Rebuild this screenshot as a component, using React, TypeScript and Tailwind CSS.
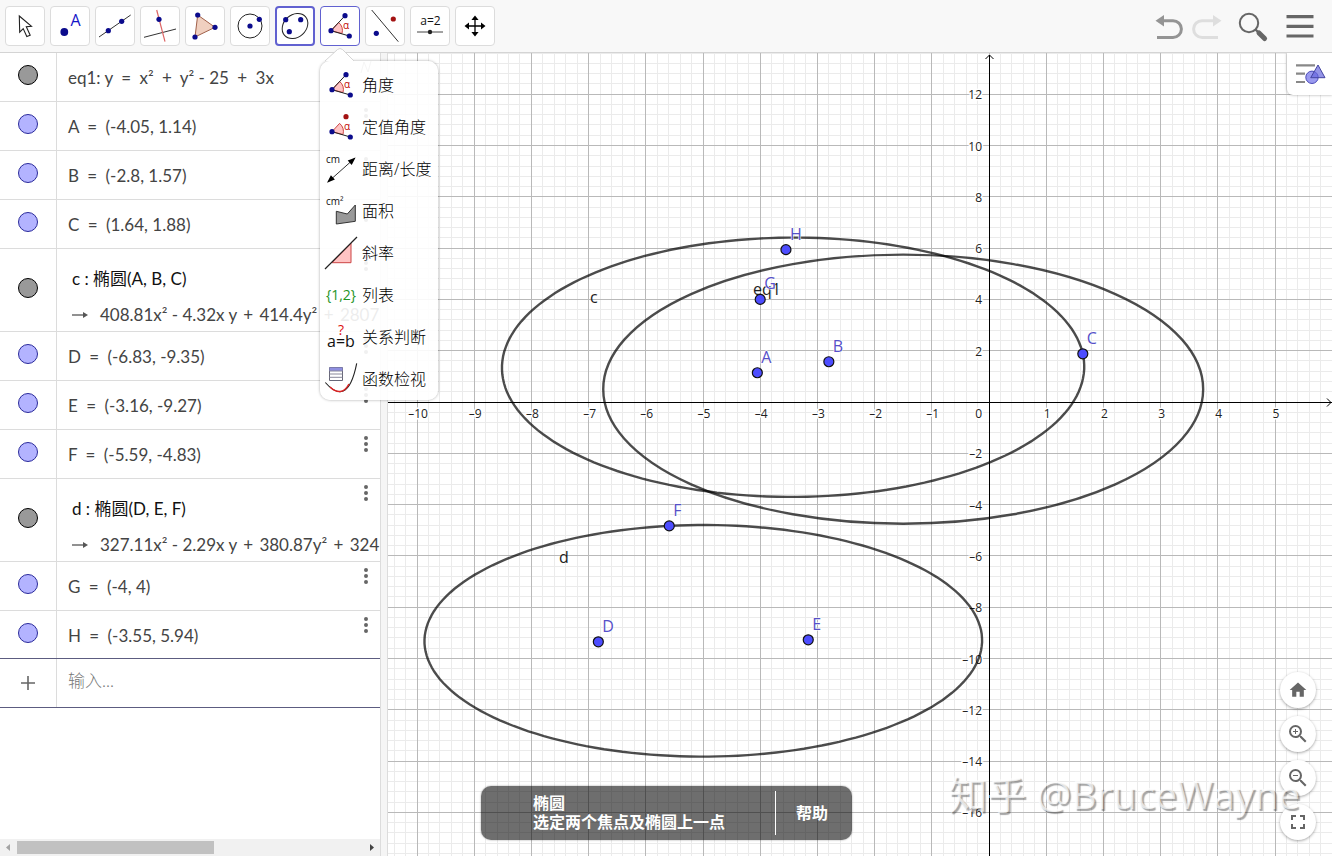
import type { ReactNode } from "react";
import { MdFullscreen, MdHome, MdZoomIn, MdZoomOut } from "react-icons/md";

const BLUE = "#0b0b8c";

type Row = {
  name: string;
  text: string;
  output?: string;
  curve?: boolean;
};

const rows: Row[] = [
  { name: "eq1", text: "eq1: y = x² + y² - 25 + 3x", curve: true },
  { name: "A", text: "A = (-4.05, 1.14)" },
  { name: "B", text: "B = (-2.8, 1.57)" },
  { name: "C", text: "C = (1.64, 1.88)" },
  {
    name: "c",
    text: "c : 椭圆(A, B, C)",
    output: "408.81x² - 4.32x y + 414.4y² + 2807",
    curve: true,
  },
  { name: "D", text: "D = (-6.83, -9.35)" },
  { name: "E", text: "E = (-3.16, -9.27)" },
  { name: "F", text: "F = (-5.59, -4.83)" },
  {
    name: "d",
    text: "d : 椭圆(D, E, F)",
    output: "327.11x² - 2.29x y + 380.87y² + 324",
    curve: true,
  },
  { name: "G", text: "G = (-4, 4)" },
  { name: "H", text: "H = (-3.55, 5.94)" },
];

type Point = { name: string; x: number; y: number };

const points: Point[] = [
  { name: "A", x: -4.05, y: 1.14 },
  { name: "B", x: -2.8, y: 1.57 },
  { name: "C", x: 1.64, y: 1.88 },
  { name: "D", x: -6.83, y: -9.35 },
  { name: "E", x: -3.16, y: -9.27 },
  { name: "F", x: -5.59, y: -4.83 },
  { name: "G", x: -4, y: 4 },
  { name: "H", x: -3.55, y: 5.94 },
];

// origin and scale of the drawing plane
const OX = 601;
const OY = 349;
const SX = 57.2;
const SY = 25.65;

const px = (x: number) => OX + x * SX;
const py = (y: number) => OY - y * SY;
const crisp = (v: number) => Math.floor(v) + 0.5;

const AX = crisp(OX);
const AY = crisp(OY);

const range = (from: number, to: number) =>
  Array.from({ length: to - from + 1 }, (_, i) => from + i);

const label = (n: number) => (n < 0 ? `–${-n}` : `${n}`);

// ellipse with foci p and q that passes through r
function ellipsePath(p: Point, q: Point, r: Point) {
  const a =
    (Math.hypot(r.x - p.x, r.y - p.y) + Math.hypot(r.x - q.x, r.y - q.y)) / 2;
  const c = Math.hypot(q.x - p.x, q.y - p.y) / 2;
  const b = Math.sqrt(a * a - c * c);
  const t = Math.atan2(q.y - p.y, q.x - p.x);
  const cx = (p.x + q.x) / 2;
  const cy = (p.y + q.y) / 2;
  const pts = range(0, 179).map((i) => {
    const s = (i * Math.PI) / 90;
    const u = a * Math.cos(s);
    const v = b * Math.sin(s);
    const x = cx + u * Math.cos(t) - v * Math.sin(t);
    const y = cy + u * Math.sin(t) + v * Math.cos(t);
    return `${px(x).toFixed(1)} ${py(y).toFixed(1)}`;
  });
  return `M${pts.join("L")}Z`;
}

const [A, B, C, D, E, F] = points;

function Svg({ children }: { children: ReactNode }) {
  return (
    <svg
      viewBox="0 0 32 32"
      fill="none"
      className="size-8 shrink-0 overflow-visible font-['Open_Sans',sans-serif] font-normal"
      aria-hidden="true"
    >
      {children}
    </svg>
  );
}

function Dot({ x, y, fill = BLUE }: { x: number; y: number; fill?: string }) {
  return <circle cx={x} cy={y} r="2.6" fill={fill} />;
}

function AngleMark({ fixed }: { fixed?: boolean }) {
  return (
    <Svg>
      <path d="M7 20.7L14.6 12.4A11 11 0 0 1 18 23.5Z" fill="#ffc4c4" stroke="#c44" />
      {!fixed && <path d="M7 20.7L21 5.7" stroke="#222" />}
      <path d="M7 20.7L25.3 26" stroke="#222" />
      <Dot x={7} y={20.7} />
      <Dot x={21} y={5.7} fill={fixed ? "#a31212" : BLUE} />
      <Dot x={25.3} y={26} />
      <text x="19" y="19" fontSize="10" fill="#c00000">
        α
      </text>
    </Svg>
  );
}

const tools: { name: string; icon: ReactNode }[] = [
  {
    name: "移动",
    icon: (
      <Svg>
        <path
          d="M10.3 6L22.5 16.3L17.3 16.8L21.2 25.2L17.8 26.6L14.2 18.6L10.7 22.2Z"
          fill="#fff"
          stroke="#222"
          strokeWidth="1.1"
        />
      </Svg>
    ),
  },
  {
    name: "点",
    icon: (
      <Svg>
        <circle cx="10.3" cy="22" r="3.9" fill={BLUE} />
        <text x="16.5" y="16" fontSize="16" fill="#1414c8">
          A
        </text>
      </Svg>
    ),
  },
  {
    name: "直线",
    icon: (
      <Svg>
        <path d="M0 27L31.7 5" stroke="#333" />
        <Dot x={9.3} y={20.7} />
        <Dot x={22.7} y={11.3} />
      </Svg>
    ),
  },
  {
    name: "垂线",
    icon: (
      <Svg>
        <path d="M0 27.3L32 19" stroke="#333" />
        <path d="M12.7 0L21 31.7" stroke="#d66" strokeWidth="1.2" />
        <Dot x={15} y={9.3} />
      </Svg>
    ),
  },
  {
    name: "多边形",
    icon: (
      <Svg>
        <path d="M8.7 5L26 17.3L6 27Z" fill="#f0d0c0" stroke="#a0604a" />
        <Dot x={8.7} y={5} />
        <Dot x={26} y={17.3} />
        <Dot x={6} y={27} />
      </Svg>
    ),
  },
  {
    name: "圆",
    icon: (
      <Svg>
        <circle cx="16" cy="16" r="12" stroke="#222" />
        <Dot x={16} y={16} />
        <Dot x={25.3} y={9.3} />
      </Svg>
    ),
  },
  {
    name: "椭圆",
    icon: (
      <Svg>
        <ellipse
          cx="16"
          cy="16"
          rx="14"
          ry="11.2"
          stroke="#222"
          transform="rotate(-42 16 16)"
        />
        <Dot x={6.7} y={9.7} />
        <Dot x={21.7} y={9.7} />
        <Dot x={10.3} y={21.7} />
      </Svg>
    ),
  },
  { name: "角度", icon: <AngleMark /> },
  {
    name: "轴对称",
    icon: (
      <Svg>
        <path d="M2.7 0L29.3 31.7" stroke="#333" />
        <Dot x={24.3} y={9} fill="#a31212" />
        <Dot x={7.3} y={23.3} />
      </Svg>
    ),
  },
  {
    name: "滑动条",
    icon: (
      <Svg>
        <text x="16.5" y="15" fontSize="12" textAnchor="middle" fill="#111">
          a=2
        </text>
        <path d="M3 22H29" stroke="#444" />
        <circle cx="16" cy="22" r="2.2" fill="#222" />
      </Svg>
    ),
  },
  {
    name: "移动视图",
    icon: (
      <Svg>
        <path d="M16 8V24M8 16H24" stroke="#000" strokeWidth="1.3" />
        <path
          d="M16 5.5L19.6 10H12.4ZM16 26.5L19.6 22H12.4ZM5.5 16L10 12.4V19.6ZM26.5 16L22 12.4V19.6Z"
          fill="#000"
        />
      </Svg>
    ),
  },
];

const menu: { name: string; icon: ReactNode }[] = [
  { name: "角度", icon: <AngleMark /> },
  { name: "定值角度", icon: <AngleMark fixed /> },
  {
    name: "距离/长度",
    icon: (
      <Svg>
        <text x="1" y="10" fontSize="10" fill="#111">
          cm
        </text>
        <path d="M3 29L29.6 5.3" stroke="#333" />
        <path
          d="M30.6 4.4L26.7 12L22.7 7.6ZM2 29.8L5.9 22.2L9.9 26.6Z"
          fill="#000"
        />
      </Svg>
    ),
  },
  {
    name: "面积",
    icon: (
      <Svg>
        <text x="1" y="10" fontSize="10" fill="#111">
          cm²
        </text>
        <path
          d="M11.3 16.3L22.3 19L30.3 10V26.3L11.3 29Z"
          fill="#999"
          stroke="#333"
        />
      </Svg>
    ),
  },
  {
    name: "斜率",
    icon: (
      <Svg>
        <path d="M7 25.7H26V6.3Z" fill="#ffc4c4" stroke="#c44" />
        <path d="M0 32L32 0" stroke="#222" strokeWidth="1.2" />
      </Svg>
    ),
  },
  {
    name: "列表",
    icon: (
      <Svg>
        <text x="16" y="21" fontSize="14" textAnchor="middle" fill="#1f941f">
          {"{1,2}"}
        </text>
      </Svg>
    ),
  },
  {
    name: "关系判断",
    icon: (
      <Svg>
        <text x="16" y="14" fontSize="14" textAnchor="middle" fill="#d11">
          ?
        </text>
        <text x="16" y="26" fontSize="16" textAnchor="middle" fill="#111">
          a=b
        </text>
      </Svg>
    ),
  },
  {
    name: "函数检视",
    icon: (
      <Svg>
        <path d="M4.5 4.5H17.5V17.5H4.5Z" fill="#fff" stroke="#667" />
        <path d="M4.5 4.5H17.5V8H4.5Z" fill="#8f8fe0" />
        <path d="M4.5 8H17.5M4.5 11H17.5M4.5 14.3H17.5" stroke="#889" />
        <path d="M.3 19.5C13 34 25 34 31.7.3" stroke="#222" strokeWidth="1.1" />
        <path
          d="M5 24C12 30.6 19 30.4 24 21"
          stroke="#d22"
          strokeWidth="1.5"
        />
      </Svg>
    ),
  },
];

function Toolbar() {
  return (
    <header className="flex h-[53px] shrink-0 items-start justify-between border-b border-[#d4d4d4] bg-[#f8f8f8] pt-1.5 pr-4 pl-[5px]">
      <nav className="flex gap-[5px]" aria-label="工具">
        {tools.map((tool, i) => (
          <div key={tool.name} className="relative">
            <button
              type="button"
              aria-label={tool.name}
              className={`flex size-10 items-center justify-center rounded bg-white ${
                i === 6
                  ? "border-2 border-[#6161d0]"
                  : i === 7
                    ? "border border-[#6161d0]"
                    : "border border-[#dcdcdc]"
              }`}
            >
              {tool.icon}
            </button>
            {i === 7 && <ToolMenu />}
          </div>
        ))}
      </nav>
      <div className="flex pt-1">
        <button type="button" aria-label="撤销" className="mr-[7px]">
          <Svg>
            <path d="M9 10.7H20a8.4 8.4 0 0 1 0 16.8H4" stroke="#949494" strokeWidth="3" />
            <path d="M2.5 10.7L11 5V16.4Z" fill="#949494" />
          </Svg>
        </button>
        <button type="button" aria-label="重做" disabled className="mr-[13px]">
          <Svg>
            <path d="M21 10.7H10a8.4 8.4 0 0 0 0 16.8H26" stroke="#dedede" strokeWidth="3" />
            <path d="M29.5 10.7L21 5V16.4Z" fill="#dedede" />
          </Svg>
        </button>
        <button type="button" aria-label="搜索" className="mr-[15px]">
          <Svg>
            <circle cx="12" cy="13" r="9.2" stroke="#666" strokeWidth="2" />
            <path d="M18.5 19.5L22 23" stroke="#666" strokeWidth="2.4" />
            <path d="M22 23L27.6 28.6" stroke="#666" strokeWidth="5" strokeLinecap="round" />
          </Svg>
        </button>
        <button type="button" aria-label="菜单">
          <Svg>
            <path d="M2.5 6.7H29.5M2.5 16.4H29.5M2.5 26H29.5" stroke="#666" strokeWidth="3.2" />
          </Svg>
        </button>
      </div>
    </header>
  );
}

function ToolMenu() {
  return (
    <div className="absolute top-[55px] left-0 z-20 w-[118px] rounded-[10px] bg-white/90 pt-[3px] shadow-[0_0_3px_rgba(0,0,0,0.35)]">
      <svg
        viewBox="0 0 30 13"
        className="absolute -top-[13px] left-[5px] h-[13px] w-[30px]"
        aria-hidden="true"
      >
        <path d="M0 13L12.5 1.5Q15 -.5 17.5 1.5L29 13Z" fill="#fff" />
        <path d="M0 13L12.5 1.5Q15 -.5 17.5 1.5L29 13" fill="none" stroke="#d4d4d4" />
      </svg>
      <ul>
        {menu.map((item) => (
          <li key={item.name}>
            <button
              type="button"
              className="flex h-[42px] w-full items-center gap-[5px] pl-[5px] text-base font-light whitespace-nowrap text-black"
            >
              {item.icon}
              {item.name}
            </button>
          </li>
        ))}
      </ul>
    </div>
  );
}

// gives = and + the wide spacing of typeset formulas
function Formula({ text, tight }: { text: string; tight?: boolean }) {
  return (
    <span>
      {text.split(/([=+])/).map((part, i) =>
        i % 2 ? (
          <span key={i} className={tight ? "px-0.5" : "px-1"}>
            {part}
          </span>
        ) : (
          part
        ),
      )}
    </span>
  );
}

function AlgebraRow({ row }: { row: Row }) {
  return (
    <li
      className={`flex border-b border-[#dcdcdc] last:h-12 last:border-[#5c5c80] ${
        row.output ? "h-[83px]" : "h-[49px]"
      }`}
    >
      <div className="flex w-[57px] shrink-0 items-center justify-center border-r border-[#dcdcdc] pb-1">
        <button
          type="button"
          aria-label={`显示 ${row.name}`}
          className={`size-5 rounded-full border ${
            row.curve
              ? "border-black bg-[#999]"
              : "border-[#2a2a9a] bg-[#b3b3ff]"
          }`}
        />
      </div>
      <div className="relative min-w-0 flex-1 overflow-hidden pl-[11px] text-[17px] leading-6 whitespace-nowrap text-[#444]">
        {row.output ? (
          <div className="flex flex-col gap-3 pt-[18px] pl-1">
            <p className="text-[#111]">{row.text}</p>
            <p className="flex items-center gap-3">
              <svg viewBox="0 0 16 8" className="h-2 w-4 shrink-0" aria-hidden="true">
                <path d="M0 4H14" stroke="#555" strokeWidth="1.3" />
                <path d="M16 4L11 1V7Z" fill="#555" />
              </svg>
              <Formula text={row.output} tight />
            </p>
          </div>
        ) : (
          <p className="pt-[13px]">
            <Formula text={row.text} />
          </p>
        )}
        <button
          type="button"
          aria-label={`${row.name} 更多`}
          className="absolute top-1.5 right-2 flex h-4 w-3 items-center justify-center"
        >
          {row.name === "eq1" ? (
            <svg viewBox="0 0 12 16" className="h-4 w-3" aria-hidden="true">
              <path d="M1 14L4 3L8 13L11 2" fill="none" stroke="#999" />
            </svg>
          ) : (
            <svg viewBox="0 0 4 16" className="h-4 w-1" aria-hidden="true">
              <path
                d="M2 2V2M2 8V8M2 14V14"
                stroke="#666"
                strokeWidth="4"
                strokeLinecap="round"
              />
            </svg>
          )}
        </button>
      </div>
    </li>
  );
}

function AlgebraView() {
  return (
    <aside className="flex w-[380px] shrink-0 flex-col bg-white font-['Lato','Noto_Sans_CJK_SC',sans-serif]">
      <ul>
        {rows.map((row) => (
          <AlgebraRow key={row.name} row={row} />
        ))}
      </ul>
      <div className="flex h-[49px] border-b border-[#5c5c80]">
        <div className="flex w-[57px] shrink-0 items-center justify-center border-r border-[#dcdcdc]">
          <svg viewBox="0 0 14 14" className="size-3.5" aria-hidden="true">
            <path d="M7 0V14M0 7H14" stroke="#666" strokeWidth="1.6" />
          </svg>
        </div>
        <input
          type="text"
          aria-label="输入"
          placeholder="输入..."
          className="min-w-0 flex-1 pb-1 pl-[11px] text-[17px] font-light outline-none placeholder:text-[#777]"
        />
      </div>
      <div className="mt-auto flex h-[17px] items-center justify-between bg-[#f1f1f1]">
        <svg viewBox="0 0 17 17" className="size-[17px]" aria-hidden="true">
          <path d="M10 5V12L6 8.5Z" fill="#a3a3a3" />
        </svg>
        <div className="h-full flex-1 py-0.5">
          <div className="h-full w-[57%] bg-[#c1c1c1]" />
        </div>
        <svg viewBox="0 0 17 17" className="size-[17px]" aria-hidden="true">
          <path d="M7 5V12L11 8.5Z" fill="#444" />
        </svg>
      </div>
    </aside>
  );
}

function Plane() {
  return (
    <svg
      className="block size-full font-['Open_Sans','Noto_Sans',sans-serif]"
      role="img"
      aria-label="绘图区"
    >
      <g stroke="#ebebeb">
        {range(-60, 100).map((i) => (
          <line key={i} x1={crisp(px(i / 5))} x2={crisp(px(i / 5))} y1="0" y2="100%" />
        ))}
        {range(-80, 40).map((i) => (
          <line key={i} y1={crisp(py(i * 0.4))} y2={crisp(py(i * 0.4))} x1="0" x2="100%" />
        ))}
      </g>
      <g stroke="#b9b9b9">
        {range(-12, 20).map((i) => (
          <line key={i} x1={crisp(px(i))} x2={crisp(px(i))} y1="0" y2="100%" />
        ))}
        {range(-16, 8).map((i) => (
          <line key={i} y1={crisp(py(i * 2))} y2={crisp(py(i * 2))} x1="0" x2="100%" />
        ))}
      </g>

      <g stroke="#000" fill="none">
        <path d={`M${AX - 4} 6L${AX} 2L${AX + 4} 6`} />
        <line x1={AX} x2={AX} y1="2" y2="100%" />
        <line x1="0" x2="100%" y1={AY} y2={AY} />
        <svg x="100%" y={AY} overflow="visible">
          <path d="M-5 -4L-1 0L-5 4" />
        </svg>
      </g>

      <g
        fontSize="12"
        fill="#222"
        stroke="#fff"
        strokeWidth="3"
        paintOrder="stroke"
      >
        {range(-10, 5)
          .filter((n) => n !== 0)
          .map((n) => (
            <text key={n} x={px(n) + 1} y="365" textAnchor="middle">
              {label(n)}
            </text>
          ))}
        <text x="594" y="365" textAnchor="end">
          0
        </text>
        {range(-8, 6)
          .filter((n) => n !== 0)
          .map((n) => (
            <text key={n} x="594" y={py(n * 2) + 5} textAnchor="end">
              {label(n * 2)}
            </text>
          ))}
      </g>

      <g fill="none" stroke="#000" strokeOpacity="0.7" strokeWidth="2.4">
        <ellipse
          cx={px(-1.5)}
          cy={py(0.5)}
          rx={Math.sqrt(27.5) * SX}
          ry={Math.sqrt(27.5) * SY}
        />
        <path d={ellipsePath(A, B, C)} />
        <path d={ellipsePath(D, E, F)} />
      </g>

      <g fontSize="16" fill="#222">
        <text x="202" y="250">
          c
        </text>
        <text x="171" y="510">
          d
        </text>
        <text x="365" y="242">
          eq1
        </text>
      </g>

      {points.map((p) => (
        <g key={p.name}>
          <circle
            cx={px(p.x)}
            cy={py(p.y)}
            r="5"
            fill="#4d4dff"
            stroke="#111"
            strokeWidth="1.2"
          />
          <text
            x={px(p.x) + 4}
            y={py(p.y) - 10}
            fontSize="16"
            fill="#5650c8"
            stroke="#fff"
            strokeWidth="1"
            paintOrder="stroke"
          >
            {p.name}
          </text>
        </g>
      ))}
    </svg>
  );
}

function GraphicsView() {
  const round =
    "flex size-9 items-center justify-center rounded-full bg-white text-[#666] shadow-[0_1px_3px_rgba(0,0,0,0.35)]";

  return (
    <main className="relative min-w-0 flex-1 overflow-hidden bg-white">
      <Plane />

      <button
        type="button"
        aria-label="样式栏"
        className="absolute top-0 right-0 flex h-[42px] w-[45px] justify-center rounded-bl-md bg-white pt-2 shadow-[0_0_3px_rgba(0,0,0,0.35)]"
      >
        <svg viewBox="0 0 32 26" fill="none" className="h-[26px] w-8" aria-hidden="true">
          <path d="M2 4.3H21M2 12.7H11M2 21H11" stroke="#888" strokeWidth="2.2" />
          <circle cx="18" cy="16.3" r="6.2" fill="#9a9af0" stroke="#4a4ab8" />
          <path d="M24 4L31 16.7H16.7Z" fill="#6666dd" fillOpacity=".7" stroke="#4444a0" />
        </svg>
      </button>

      <div className="absolute right-4 bottom-4 flex flex-col gap-2">
        <button type="button" aria-label="标准视图" className={round}>
          <MdHome className="size-5" />
        </button>
        <button type="button" aria-label="放大" className={round}>
          <MdZoomIn className="size-6" />
        </button>
        <button type="button" aria-label="缩小" className={round}>
          <MdZoomOut className="size-6" />
        </button>
        <button type="button" aria-label="全屏" className={round}>
          <MdFullscreen className="size-6" />
        </button>
      </div>

      <div className="absolute bottom-4 left-[93px] flex h-[54px] w-[371px] items-center rounded-[10px] bg-black/57 pr-6 pl-[52px] text-base leading-[19px] font-bold text-white shadow-[0_0_2px_rgba(0,0,0,0.4)]">
        <div className="flex-1">
          <p>椭圆</p>
          <p>选定两个焦点及椭圆上一点</p>
        </div>
        <a href="#help" className="flex h-11 items-center border-l border-white pl-5">
          帮助
        </a>
      </div>

      <p className="pointer-events-none absolute right-8 bottom-9 text-[39px] leading-[52px] whitespace-nowrap text-white/70 [text-shadow:2px_2px_1px_rgba(0,0,0,0.35)]">
        知乎 @BruceWayne
      </p>
    </main>
  );
}

export default function App() {
  return (
    <div className="flex h-screen flex-col overflow-hidden bg-white font-['Open_Sans','Noto_Sans_CJK_SC',sans-serif]">
      <Toolbar />
      <div className="flex min-h-0 flex-1">
        <AlgebraView />
        <div className="w-2 shrink-0 border-x border-[#dcdcdc] bg-[#f5f5f5]" />
        <GraphicsView />
      </div>
    </div>
  );
}
